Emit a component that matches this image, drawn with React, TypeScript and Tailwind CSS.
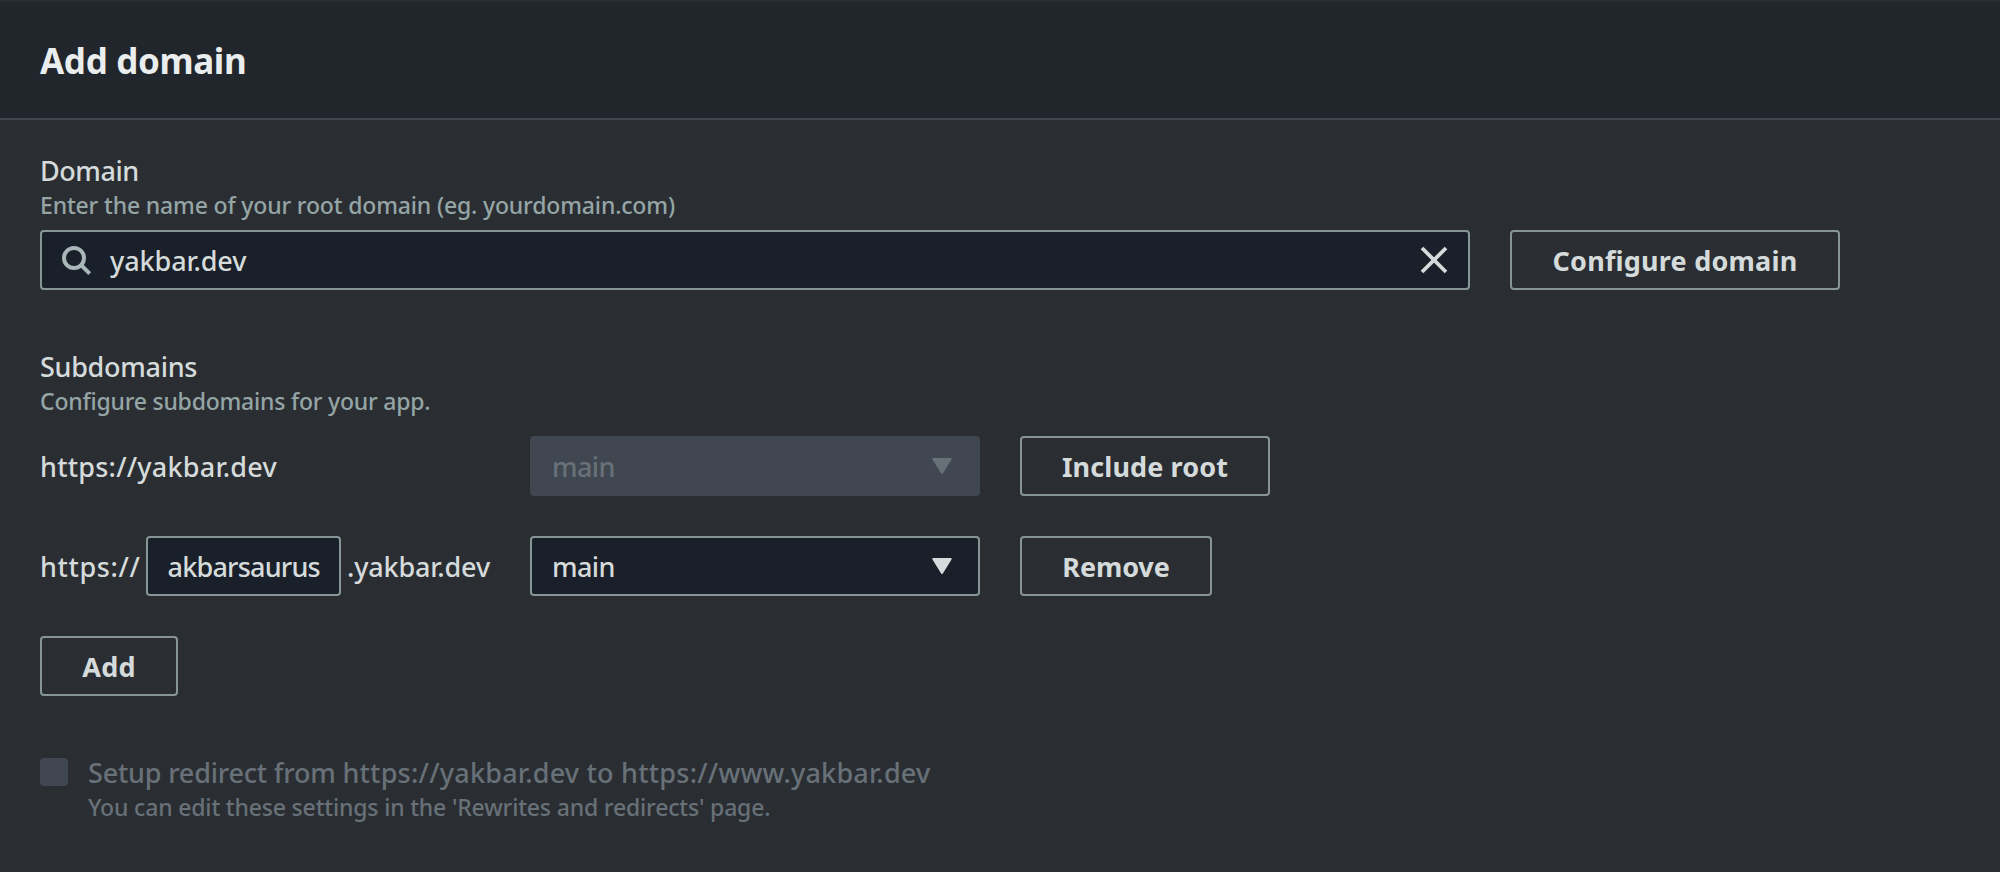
import type { ReactNode } from 'react';

function Caret({ className }: { className: string }) {
  return (
    <svg width="20" height="16" viewBox="0 0 20 16" className={className}>
      <path d="M1.3 1h17.4L10 15z" fill="currentColor" stroke="currentColor" strokeWidth="2" strokeLinejoin="round" />
    </svg>
  );
}

function Button({ className, children }: { className: string; children: ReactNode }) {
  return (
    <button
      className={`flex h-[60px] shrink-0 items-center justify-center rounded-[4px] border-2 border-[#879596] pt-[2px] text-[27px] font-bold whitespace-nowrap text-[#d5dbdb] ${className}`}
    >
      {children}
    </button>
  );
}

function Select({ disabled = false }: { disabled?: boolean }) {
  return (
    <div
      className={`flex h-[60px] w-[450px] shrink-0 items-center justify-between rounded-[4px] border-2 pr-[26px] pl-5 ${
        disabled ? 'border-[#414750] bg-[#414750] text-[#687078]' : 'border-[#879596] bg-[#1a2029] text-[#d5dbdb]'
      }`}
    >
      <span className="pt-[2px] tracking-[-0.6px]">main</span>
      <Caret className={disabled ? '-mt-[1px] text-[#687078]' : '-mt-[1px] text-[#d5dbdb]'} />
    </div>
  );
}

export default function App() {
  return (
    <div className="h-[872px] w-full overflow-hidden bg-[#2a2e33] pt-[2px] font-['Noto_Sans',sans-serif] text-[27px] leading-9 font-medium text-[#d5dbdb]">
      <header className="flex h-[118px] items-center border-b-2 border-[#414750] bg-[#21252c] px-10">
        <h1 className="pt-[2px] text-[35px] leading-[48px] font-bold tracking-[-0.35px] text-[#eaeded]">Add domain</h1>
      </header>

      <main className="px-10 pt-[33px]">
        <section>
          <h2 className="tracking-[-0.45px]">Domain</h2>
          <p className="text-[23px] leading-8 tracking-[-0.16px] text-[#95a5a6]">
            Enter the name of your root domain (eg. yourdomain.com)
          </p>
          <div className="mt-[9px] flex gap-10">
            <div className="flex h-[60px] w-[1430px] items-center rounded-[4px] border-2 border-[#879596] bg-[#1a2029] px-5">
              <svg
                width="30"
                height="30"
                viewBox="0 0 30 30"
                className="mt-[2px] shrink-0"
                fill="none"
                stroke="#aab7b8"
                strokeWidth="4"
              >
                <circle cx="12" cy="12" r="10" />
                <path d="M19 19l8.7 8.7" />
              </svg>
              <span className="ml-[18px] flex-1 pt-[2px] tracking-[-0.1px]">yakbar.dev</span>
              <svg width="28" height="28" viewBox="0 0 28 28" fill="none" stroke="#d5dbdb" strokeWidth="3.8">
                <path d="M2 2l24 24M26 2L2 26" />
              </svg>
            </div>
            <Button className="w-[330px] tracking-[0.2px]">Configure domain</Button>
          </div>
        </section>

        <section className="mt-[59px]">
          <h2 className="tracking-[-0.3px]">Subdomains</h2>
          <p className="text-[23px] leading-8 tracking-[-0.22px] text-[#95a5a6]">Configure subdomains for your app.</p>
          <div className="mt-[19px] flex flex-col gap-10">
            <div className="flex items-center gap-10">
              <span className="w-[450px] pt-[2px] tracking-[0.22px]">https://yakbar.dev</span>
              <Select disabled />
              <Button className="w-[250px] tracking-[0.1px]">Include root</Button>
            </div>
            <div className="flex items-center gap-10">
              <div className="flex w-[450px] items-center whitespace-nowrap">
                <span className="w-[106px] pt-[2px] tracking-[0.6px]">https://</span>
                <span className="flex h-[60px] w-[196px] items-center rounded-[4px] border-2 border-[#879596] bg-[#1a2029] pt-[2px] pl-5 tracking-[-0.8px]">
                  akbarsaurus
                </span>
                <span className="ml-[6px] pt-[2px] tracking-[-0.15px]">.yakbar.dev</span>
              </div>
              <Select />
              <Button className="w-[192px] tracking-[-0.1px]">Remove</Button>
            </div>
            <Button className="w-[138px] tracking-[0.2px]">Add</Button>
          </div>
        </section>

        <section className="mt-[58px] flex gap-5 text-[#687078]">
          <span className="mt-1 size-7 shrink-0 rounded-[4px] bg-[#414750]" />
          <div>
            <p className="pt-[1px] leading-[35px] tracking-[0.22px]">
              <span className="tracking-[-0.2px]">Setup redirect from </span>
              https://yakbar.dev to https://www.yakbar.dev
            </p>
            <p className="text-[23px] leading-[34px] tracking-[-0.17px]">
              You can edit these settings in the 'Rewrites and redirects' page.
            </p>
          </div>
        </section>
      </main>
    </div>
  );
}
